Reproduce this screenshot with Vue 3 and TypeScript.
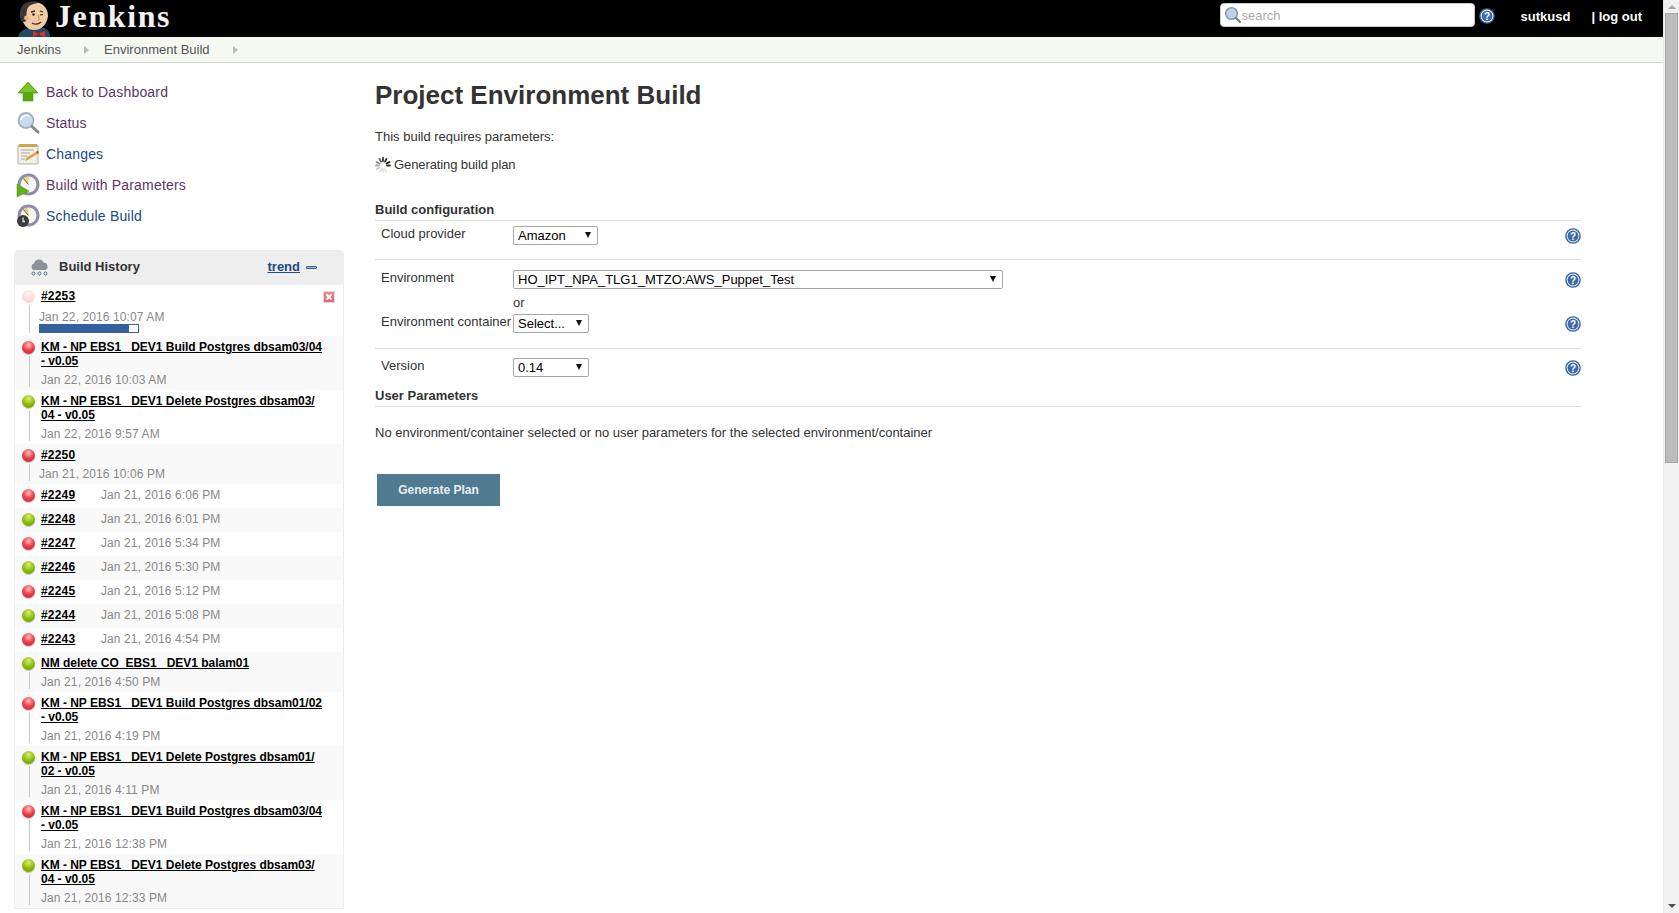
<script setup lang="ts">
interface Build {
  state: "red" | "green" | "pending";
  lines: string[];
  date: string;
  inline?: boolean;
  indent?: boolean;
  progress?: number;
}

const tasks = [
  { label: "Back to Dashboard", icon: "up", visited: true },
  { label: "Status", icon: "status", visited: true },
  { label: "Changes", icon: "changes", visited: false },
  { label: "Build with Parameters", icon: "params", visited: true },
  { label: "Schedule Build", icon: "schedule", visited: false },
];

const builds: Build[] = [
  { state: "pending", lines: ["#2253"], date: "Jan 22, 2016 10:07 AM", indent: true, progress: 91 },
  { state: "red", lines: ["KM - NP EBS1_ DEV1 Build Postgres dbsam03/04", "- v0.05"], date: "Jan 22, 2016 10:03 AM" },
  { state: "green", lines: ["KM - NP EBS1_ DEV1 Delete Postgres dbsam03/", "04 - v0.05"], date: "Jan 22, 2016 9:57 AM" },
  { state: "red", lines: ["#2250"], date: "Jan 21, 2016 10:06 PM", indent: true },
  { state: "red", lines: ["#2249"], date: "Jan 21, 2016 6:06 PM", inline: true },
  { state: "green", lines: ["#2248"], date: "Jan 21, 2016 6:01 PM", inline: true },
  { state: "red", lines: ["#2247"], date: "Jan 21, 2016 5:34 PM", inline: true },
  { state: "green", lines: ["#2246"], date: "Jan 21, 2016 5:30 PM", inline: true },
  { state: "red", lines: ["#2245"], date: "Jan 21, 2016 5:12 PM", inline: true },
  { state: "green", lines: ["#2244"], date: "Jan 21, 2016 5:08 PM", inline: true },
  { state: "red", lines: ["#2243"], date: "Jan 21, 2016 4:54 PM", inline: true },
  { state: "green", lines: ["NM delete CO_EBS1_ DEV1 balam01"], date: "Jan 21, 2016 4:50 PM" },
  { state: "red", lines: ["KM - NP EBS1_ DEV1 Build Postgres dbsam01/02", "- v0.05"], date: "Jan 21, 2016 4:19 PM" },
  { state: "green", lines: ["KM - NP EBS1_ DEV1 Delete Postgres dbsam01/", "02 - v0.05"], date: "Jan 21, 2016 4:11 PM" },
  { state: "red", lines: ["KM - NP EBS1_ DEV1 Build Postgres dbsam03/04", "- v0.05"], date: "Jan 21, 2016 12:38 PM" },
  { state: "green", lines: ["KM - NP EBS1_ DEV1 Delete Postgres dbsam03/", "04 - v0.05"], date: "Jan 21, 2016 12:33 PM" },
];
</script>

<template>
  <div class="window">
    <svg class="defs" width="0" height="0">
      <symbol id="help" viewBox="0 0 16 16">
        <circle cx="8" cy="8" r="7.8" fill="#34609c" />
        <circle cx="8" cy="8" r="6.4" fill="#fff" />
        <circle cx="8" cy="8" r="5.5" fill="#3d6ba6" />
        <text x="8" y="12" text-anchor="middle" class="help-mark">?</text>
      </symbol>
      <symbol id="clock" viewBox="0 0 24 24">
        <circle cx="12.5" cy="11.5" r="11" fill="#8f8ca3" />
        <circle cx="12.5" cy="11.5" r="8" fill="#f6f5f1" />
        <path d="M12.5 11.5 L6.5 6 A8 8 0 0 1 12.5 3.5 Z" fill="#e6d47c" />
        <path d="M12.5 11.5 L7.5 5.5" stroke="#666" stroke-width="1" />
      </symbol>
    </svg>

    <div class="page">
      <header class="top-bar">
        <div class="logo">
          <svg width="36" height="37" viewBox="0 0 36 37">
            <path d="M0 37 C1 31 6 29 11 28 L26 28 C30 29 32 32 32 37 Z" fill="#234a63" />
            <path d="M15 31 L20 33.5 L27 31 L27 37 L20 34.5 L15 37 Z" fill="#d9342b" />
            <circle cx="20.5" cy="34" r="1.4" fill="#a81f1a" />
            <g transform="translate(-3 0)">
              <path d="M6 14 C6 5 12 2 19 2 C27 2 33 8 33 16 C32 24 27 30 19 30 C12 30 7 24 6 14 Z" fill="#f1cba6" />
              <path d="M6 20 C3 12 6 4 13 2 C17 1 22 1 25 3 C19 3 13 5 12 10 C11 14 12 17 11 21 C9 23 7 22 6 20 Z" fill="#3b3a3a" />
              <circle cx="11.5" cy="18" r="2.4" fill="#e6b48e" />
              <path d="M16 12 L20 11 M25 11 L28 12" stroke="#333" stroke-width="1.3" fill="none" />
              <circle cx="18.5" cy="14.5" r="1.2" fill="#222" />
              <path d="M25 15 L28 14.5" stroke="#222" stroke-width="1.2" />
              <path d="M23 15 C24 18 25 20 23 21" stroke="#b98a68" stroke-width="1" fill="none" />
              <path d="M17 23 C20 25 24 24 26 22" stroke="#4a3a30" stroke-width="1.4" fill="none" />
            </g>
          </svg>
          <span class="logo-text">Jenkins</span>
        </div>
        <div class="top-right">
          <div class="search">
            <svg width="18" height="18" viewBox="0 0 18 18">
              <circle cx="7.5" cy="7.5" r="5.8" fill="#bcd6ee" stroke="#8a9aa8" stroke-width="1.6" />
              <path d="M12 12 L16 16" stroke="#777" stroke-width="2.2" stroke-linecap="round" />
            </svg>
            <input placeholder="search" />
          </div>
          <svg class="top-help" width="16" height="16"><use href="#help" /></svg>
          <span class="user">sutkusd</span>
          <span class="logout">| log out</span>
        </div>
      </header>

      <nav class="crumbs">
        <span class="crumb first">Jenkins</span>
        <i class="crumb-arrow"></i>
        <span class="crumb">Environment Build</span>
        <i class="crumb-arrow"></i>
      </nav>

      <div class="body">
        <aside class="side">
          <div class="tasks">
            <div v-for="t in tasks" :key="t.label" class="task">
              <svg v-if="t.icon === 'up'" width="24" height="24" viewBox="0 0 24 24">
                <path d="M12 2 L22 13 H17 V21 H7 V13 H2 Z" fill="#5aa80f" stroke="#4c9a0a" stroke-width="0.6" />
                <path d="M12 3 L20 12 H4 Z" fill="#7cc62a" />
              </svg>
              <svg v-else-if="t.icon === 'status'" width="24" height="24" viewBox="0 0 24 24">
                <circle cx="10" cy="9.5" r="7.5" fill="#c5dcf0" stroke="#a3afba" stroke-width="1.8" />
                <path d="M5 9 A5.5 5.5 0 0 1 13 5" stroke="#fff" stroke-width="1.5" fill="none" />
                <path d="M16 15.5 L22 21" stroke="#888" stroke-width="3" stroke-linecap="round" />
              </svg>
              <svg v-else-if="t.icon === 'changes'" width="24" height="24" viewBox="0 0 24 24">
                <rect x="2" y="3" width="20" height="19" rx="1" fill="#f0efe8" stroke="#b4b2a6" />
                <rect x="3" y="2" width="18" height="3" fill="#c9a94a" />
                <path d="M5 8 H18 M5 11 H14 M5 14 H11 M5 17 H9" stroke="#aaa" stroke-width="1" />
                <path d="M9 19 L10.5 15.5 L20 10 L21.5 12 L12.5 17.5 Z" fill="#d9a441" />
                <path d="M20 10 L21.5 12 L23 10 L21.5 8.8 Z" fill="#d6352b" />
              </svg>
              <svg v-else-if="t.icon === 'params'" width="24" height="24" viewBox="0 0 24 24">
                <use href="#clock" width="24" height="24" />
                <path d="M1 11 L13 18 L1 24 Z" fill="#61b01c" stroke="#4d9412" stroke-width="0.5" />
              </svg>
              <svg v-else width="24" height="24" viewBox="0 0 24 24">
                <use href="#clock" width="24" height="24" />
                <circle cx="7" cy="17" r="6" fill="#3c3c3c" />
                <path d="M7 13.5 V17.5 H9" stroke="#ddd" stroke-width="1.3" fill="none" />
              </svg>
              <span :class="['task-link', { visited: t.visited }]">{{ t.label }}</span>
            </div>
          </div>

          <section class="history">
            <div class="history-head">
              <svg width="20" height="18" viewBox="0 0 20 18">
                <path d="M3.5 11 A3.5 3.5 0 0 1 4 4.5 A5 5 0 0 1 13.5 3.5 A4 4 0 0 1 15.5 11 Z" fill="#8d9298" />
                <circle cx="3.5" cy="14.5" r="1.5" fill="#fff" stroke="#3a6ea5" />
                <circle cx="9.5" cy="14.5" r="1.5" fill="#fff" stroke="#3a6ea5" />
                <circle cx="15.5" cy="14.5" r="1.5" fill="#fff" stroke="#3a6ea5" />
              </svg>
              <span class="history-title">Build History</span>
              <span class="trend">trend</span>
              <i class="minus"></i>
            </div>
            <div
              v-for="(b, i) in builds"
              :key="i"
              :class="['build', { shaded: i % 2 === 1, inline: b.inline, running: b.progress }]"
            >
              <span :class="['ball', b.state]"></span>
              <i v-if="!b.inline" class="stem"></i>
              <div class="build-info">
                <div class="build-title">
                  <template v-for="(l, n) in b.lines" :key="n">
                    <br v-if="n > 0" /><span :class="['build-name', { num: l.startsWith('#') }]">{{ l }}</span>
                  </template>
                </div>
                <div :class="['build-date', { indent: b.indent }]">{{ b.date }}</div>
                <div v-if="b.progress" class="progress">
                  <div class="progress-fill" :style="{ width: b.progress + '%' }"></div>
                </div>
              </div>
              <span v-if="b.progress" class="stop">
                <svg width="10" height="10" viewBox="0 0 10 10">
                  <path d="M2.5 2.5 L7.5 7.5 M7.5 2.5 L2.5 7.5" stroke="#fff" stroke-width="1.8" />
                </svg>
              </span>
            </div>
          </section>
        </aside>

        <main class="main">
          <h1>Project Environment Build</h1>
          <p class="intro">This build requires parameters:</p>
          <p class="generating">
            <svg width="16" height="16" viewBox="0 0 16 16">
              <g stroke-width="1.8" stroke-linecap="round">
                <path d="M8 1 V4" stroke="#333" />
                <path d="M11.5 2 L10 4.6" stroke="#222" />
                <path d="M14.5 5 L11.5 6.5" stroke="#111" />
                <path d="M15 8.5 H12" stroke="#333" />
                <path d="M4.5 2 L6 4.6" stroke="#555" />
                <path d="M1.5 5 L4.5 6.5" stroke="#888" />
                <path d="M1 8.5 H4" stroke="#aaa" />
                <path d="M2 12 L4.6 10.5" stroke="#ccc" />
                <path d="M5 14.5 L6.5 12" stroke="#ddd" />
                <path d="M8 15 V12.5" stroke="#ddd" />
                <path d="M11 14.5 L9.8 12" stroke="#e5e5e5" />
              </g>
            </svg>
            <span class="generating-text">Generating build plan</span>
          </p>

          <h2 class="section first-section">Build configuration</h2>
          <div class="form-block cloud">
            <div class="field">
              <label>Cloud provider</label>
              <div class="select-box amazon">
                <select><option>Amazon</option></select>
              </div>
              <svg class="help" width="16" height="16"><use href="#help" /></svg>
            </div>
          </div>
          <div class="form-block env">
            <div class="field">
              <label>Environment</label>
              <div class="select-box wide">
                <select><option>HO_IPT_NPA_TLG1_MTZO:AWS_Puppet_Test</option></select>
              </div>
              <svg class="help" width="16" height="16"><use href="#help" /></svg>
            </div>
            <div class="or">or</div>
            <div class="field">
              <label>Environment container</label>
              <div class="select-box small">
                <select><option>Select...</option></select>
              </div>
              <svg class="help" width="16" height="16"><use href="#help" /></svg>
            </div>
          </div>
          <div class="form-block version">
            <div class="field">
              <label>Version</label>
              <div class="select-box small">
                <select><option>0.14</option></select>
              </div>
              <svg class="help" width="16" height="16"><use href="#help" /></svg>
            </div>
          </div>

          <h2 class="section">User Parameters</h2>
          <p class="empty">No environment/container selected or no user parameters for the selected environment/container</p>
          <button class="generate">Generate Plan</button>
        </main>
      </div>
    </div>

    <div class="scrollbar">
      <i class="arrow up"></i>
      <div class="track"><div class="thumb"></div></div>
      <i class="arrow down"></i>
    </div>
  </div>
</template>

<style>
html,
body {
  margin: 0;
  overflow: hidden;
}
</style>

<style scoped>
.window {
  display: flex;
  height: 913px;
  overflow: hidden;
  background: #fff;
  color: #333;
  font-family: "Liberation Sans", Arial, sans-serif;
  font-size: 13px;
}

.defs {
  position: absolute;
}

.help-mark {
  fill: #fff;
  font-family: "Liberation Sans", sans-serif;
  font-size: 10px;
  font-weight: bold;
}

.page {
  flex: 1;
  min-width: 0;
}

.top-bar {
  display: flex;
  justify-content: space-between;
  height: 37px;
  background: #000;
  padding: 0 21px 0 18px;
}

.logo {
  display: flex;
  align-items: flex-start;
  height: 37px;
}

.logo-text {
  margin-left: 1px;
  color: #f2f2f0;
  font-family: "Liberation Serif", serif;
  font-size: 32px;
  font-weight: bold;
  line-height: 32px;
  letter-spacing: 1.6px;
}

.top-right {
  display: flex;
  align-items: center;
}

.search {
  display: flex;
  align-items: center;
  width: 255px;
  height: 24px;
  margin-top: -7px;
  box-sizing: border-box;
  padding-left: 3px;
  background: #fff;
  border-radius: 4px;
  border: 1px solid #ccc;
}

.search input {
  flex: 1;
  min-width: 0;
  border: 0;
  outline: 0;
  padding: 0;
  background: transparent;
  font-family: inherit;
  font-size: 13px;
}

.search input::placeholder {
  color: #aaa;
}

.top-help {
  margin: -5px 0 0 4px;
}

.user {
  margin: -5px 0 0 26px;
  color: #fff;
  font-size: 13px;
  font-weight: bold;
}

.logout {
  margin: -5px 0 0 21px;
  color: #fff;
  font-size: 13px;
  font-weight: bold;
}

.crumbs {
  display: flex;
  align-items: center;
  height: 25px;
  padding-left: 17px;
  background: #f6f8f2;
  border-bottom: 1px solid #d3d7cf;
  color: #555;
  font-size: 13px;
}

.crumb-arrow {
  width: 0;
  height: 0;
  margin: 0 15px 0 23px;
  border-top: 4px solid transparent;
  border-bottom: 4px solid transparent;
  border-left: 5px solid #babdb6;
}

.body {
  display: flex;
}

.side {
  flex: none;
  width: 345px;
  padding: 13px 0 0 14px;
  box-sizing: border-box;
}

.task {
  display: flex;
  align-items: center;
  gap: 6px;
  height: 31px;
  padding-left: 2px;
  font-size: 14px;
  letter-spacing: 0.18px;
}

.task-link {
  color: #204a87;
}

.task-link.visited {
  color: #5c3566;
}

.history {
  width: 330px;
  box-sizing: border-box;
  margin-top: 19px;
  border: 1px solid #eee;
  border-top: 0;
  border-radius: 4px 4px 0 0;
}

.history-head {
  display: flex;
  align-items: center;
  height: 35px;
  padding-left: 15px;
  background: #eee;
  border-radius: 4px 4px 0 0;
  font-size: 13px;
}

.history-title {
  flex: 1;
  margin-left: 9px;
  padding-bottom: 2px;
  color: #333;
  font-weight: bold;
}

.trend {
  padding-bottom: 2px;
  color: #204a87;
  font-weight: bold;
  text-decoration: underline;
}

.minus {
  width: 11px;
  height: 3px;
  margin: 0 26px 0 6px;
  background: #a9bbd6;
  border: 1px solid #34609c;
  box-sizing: border-box;
  border-radius: 1px;
}

.build {
  position: relative;
  display: flex;
  padding: 4px 0 3px 26px;
  min-height: 24px;
  box-sizing: border-box;
}

.build.shaded {
  background: #f9f9f9;
}

.ball {
  position: absolute;
  left: 7px;
  top: 5px;
  width: 13px;
  height: 13px;
  border-radius: 50%;
  box-shadow: 0 1px 1px rgba(0, 0, 0, 0.25);
}

.ball.red {
  background: radial-gradient(circle at 50% 30%, #ffc0c0 0, #ec3d47 50%, #c52030 100%);
}

.ball.green {
  background: radial-gradient(circle at 50% 28%, #d8ec70 0, #86bc04 55%, #5d9400 100%);
}

.ball.pending {
  background: radial-gradient(circle at 50% 30%, #fff2f2 0, #fbd5d6 70%, #f6c8ca 100%);
  box-shadow: none;
}

.stem {
  position: absolute;
  left: 14px;
  top: 20px;
  bottom: 3px;
  width: 1px;
  background: #ccc;
}

.build-info {
  flex: 1;
}

.build.inline .build-info {
  display: flex;
}

.build-title {
  color: #000;
  font-size: 12px;
  font-weight: bold;
  line-height: 14px;
  letter-spacing: -0.02px;
}

.build-name {
  text-decoration: underline;
}

.build-name.num {
  letter-spacing: 0.2px;
}

.build-date {
  margin-top: 5px;
  color: #888;
  font-size: 12px;
  line-height: 14px;
  letter-spacing: 0.1px;
}

.build-date.indent {
  margin-left: -2px;
}

.build.inline {
  height: 24px;
}

.build.inline .build-title {
  width: 60px;
}

.build.inline .build-date {
  margin-top: 0;
}

.build.running .build-date {
  margin-top: 7px;
}

.progress {
  width: 100px;
  height: 9px;
  margin-left: -2px;
  box-sizing: border-box;
  border: 1px solid #34609c;
  background: #fff;
}

.progress-fill {
  height: 100%;
  background: #34609c;
}

.stop {
  position: absolute;
  top: 6px;
  right: 8px;
  display: flex;
  width: 12px;
  height: 12px;
  background: linear-gradient(#f08a8e, #e4656b);
  border: 1px solid #dcdcdc;
  box-sizing: border-box;
  align-items: center;
  justify-content: center;
}

.main {
  flex: 1;
  min-width: 0;
  padding: 17px 82px 0 30px;
}

h1 {
  margin: 0;
  color: #333;
  font-size: 26px;
  font-weight: bold;
  line-height: 30px;
}

.intro,
.generating,
.empty {
  margin: 0;
  line-height: 16px;
}

.intro {
  margin-top: 19px;
}

.generating {
  display: flex;
  align-items: center;
  gap: 3px;
  margin-top: 12px;
}

.generating-text {
  letter-spacing: -0.1px;
}

.section {
  margin: 0;
  padding-bottom: 2px;
  border-bottom: 1px solid #ddd;
  color: #333;
  font-size: 13px;
  font-weight: bold;
  line-height: 16px;
}

.first-section {
  margin-top: 29px;
}

.form-block {
  padding: 5px 0 0 6px;
  border-bottom: 1px solid #ddd;
}

.form-block.cloud {
  height: 33px;
}

.form-block.env {
  height: 78px;
  padding-top: 10px;
}

.form-block.version {
  height: 30px;
  padding-top: 9px;
  border-bottom: 0;
}

.field {
  display: flex;
  align-items: flex-start;
}

.field label {
  flex: none;
  width: 132px;
  margin-top: 1px;
  line-height: 14px;
  white-space: nowrap;
}

.select-box {
  position: relative;
  height: 19px;
}

.select-box::after {
  content: "";
  position: absolute;
  top: 6px;
  right: 7px;
  border-left: 3.5px solid transparent;
  border-right: 3.5px solid transparent;
  border-top: 6px solid #111;
  pointer-events: none;
}

.select-box.amazon {
  width: 85px;
}

.select-box.wide {
  width: 490px;
}

.select-box.small {
  width: 76px;
}

select {
  display: block;
  appearance: none;
  width: 100%;
  height: 19px;
  box-sizing: border-box;
  padding: 0 0 0 4px;
  background: #fff;
  border: 1px solid #a6a6a6;
  border-radius: 2px;
  color: #000;
  font-family: inherit;
  font-size: 13px;
}

.help {
  margin: 2px 0 0 auto;
}

.or {
  padding-left: 132px;
  margin: 7px 0 4px;
  line-height: 14px;
}

.empty {
  margin-top: 18px;
}

.generate {
  display: block;
  width: 123px;
  height: 32px;
  margin: 33px 0 0 2px;
  border: 0;
  background: #4f7a90;
  color: #e8eef1;
  font-family: inherit;
  font-size: 12px;
  font-weight: bold;
}

.scrollbar {
  flex: none;
  display: flex;
  flex-direction: column;
  width: 16px;
  background: #f1f1f1;
  border-left: 1px solid #e8e8e8;
  box-sizing: border-box;
}

.arrow {
  flex: none;
  align-self: center;
  width: 0;
  height: 0;
  border-left: 4px solid transparent;
  border-right: 4px solid transparent;
}

.arrow.up {
  margin: 5px 0 4px;
  border-bottom: 4px solid #a3a3a3;
}

.arrow.down {
  margin: 4px 0 5px;
  border-top: 4px solid #505050;
}

.track {
  flex: 1;
}

.thumb {
  width: 13px;
  height: 450px;
  margin-left: 1px;
  box-sizing: border-box;
  background: #bcbcbc;
  border: 1px solid #a8a8a8;
}
</style>
